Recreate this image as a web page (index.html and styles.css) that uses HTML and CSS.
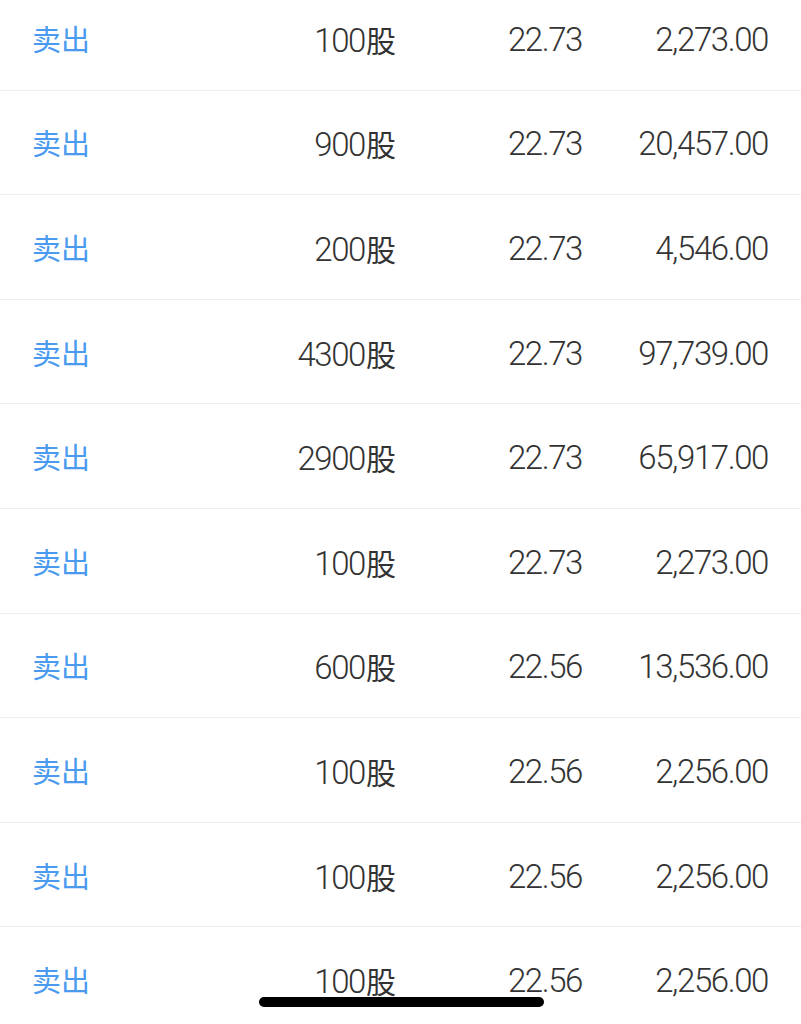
FILE: index.html
```html
<!DOCTYPE html>
<html lang="zh-CN">
<head>
<meta charset="utf-8">
<link rel="stylesheet" href="styles.css">
</head>
<body>
<div class="list">
  <div class="row"><span class="type">卖出</span><span class="num">100<span class="unit">股</span></span><span class="num">22.73</span><span class="num">2,273.00</span></div>
  <div class="row"><span class="type">卖出</span><span class="num">900<span class="unit">股</span></span><span class="num">22.73</span><span class="num">20,457.00</span></div>
  <div class="row"><span class="type">卖出</span><span class="num">200<span class="unit">股</span></span><span class="num">22.73</span><span class="num">4,546.00</span></div>
  <div class="row"><span class="type">卖出</span><span class="num">4300<span class="unit">股</span></span><span class="num">22.73</span><span class="num">97,739.00</span></div>
  <div class="row"><span class="type">卖出</span><span class="num">2900<span class="unit">股</span></span><span class="num">22.73</span><span class="num">65,917.00</span></div>
  <div class="row"><span class="type">卖出</span><span class="num">100<span class="unit">股</span></span><span class="num">22.73</span><span class="num">2,273.00</span></div>
  <div class="row"><span class="type">卖出</span><span class="num">600<span class="unit">股</span></span><span class="num">22.56</span><span class="num">13,536.00</span></div>
  <div class="row"><span class="type">卖出</span><span class="num">100<span class="unit">股</span></span><span class="num">22.56</span><span class="num">2,256.00</span></div>
  <div class="row"><span class="type">卖出</span><span class="num">100<span class="unit">股</span></span><span class="num">22.56</span><span class="num">2,256.00</span></div>
  <div class="row"><span class="type">卖出</span><span class="num">100<span class="unit">股</span></span><span class="num">22.56</span><span class="num">2,256.00</span></div>
</div>
<div class="home-indicator"></div>
</body>
</html>
```
FILE: styles.css
```css
html, body {
  margin: 0;
  padding: 0;
  background: #ffffff;
  overflow: hidden;
  height: 1024px;
}
.list {
  margin-top: -14px;
}
.row {
  display: grid;
  grid-template-columns: 1fr 186px 186px 186px;
  align-items: center;
  box-sizing: border-box;
  height: 104.6px;
  padding: 4px 33px 0 32px;
  border-bottom: 1px solid #eeeeee;
  font-family: Roboto, "Noto Sans CJK SC", sans-serif;
  font-size: 33px;
  line-height: 40px;
}
.type {
  color: #4a9af0;
  font-family: "Noto Sans CJK SC", sans-serif;
  font-size: 29px;
  margin-bottom: 4px;
}
.num {
  text-align: right;
  color: #333333;
  font-weight: 300;
  letter-spacing: -1.4px;
}
.unit {
  font-family: "Noto Sans CJK SC", sans-serif;
  font-weight: 400;
  font-size: 30px;
  letter-spacing: 0;
  margin-left: 1px;
}
.home-indicator {
  position: fixed;
  left: 50%;
  bottom: 17px;
  width: 285px;
  height: 10px;
  margin-left: -142px;
  border-radius: 5px;
  background: #000000;
}
```
